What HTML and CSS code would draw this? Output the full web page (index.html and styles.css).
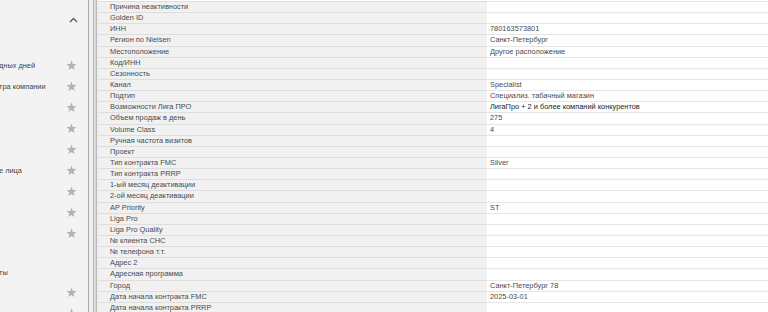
FILE: index.html
```html
<!DOCTYPE html>
<html lang="ru">
<head>
<meta charset="utf-8">
<link rel="stylesheet" href="styles.css">
</head>
<body>
<div class="app">
  <aside class="sidebar">
    <div class="side-head">
      <svg class="chevron" width="9" height="6" viewBox="0 0 9 6"><path d="M1 5 L4.5 1.5 L8 5" fill="none" stroke="#555" stroke-width="1.3"/></svg>
    </div>
    <ul class="side-list">
      <li class="side-item"><span class="side-label">дных дней</span><svg class="star" viewBox="0 0 10 10"><path d="M5 0.4 L6.2 3.6 L9.6 3.7 L6.9 5.8 L7.9 9.2 L5 7.2 L2.1 9.2 L3.1 5.8 L0.4 3.7 L3.8 3.6 Z"/></svg></li>
      <li class="side-item"><span class="side-label">тра компании</span><svg class="star" viewBox="0 0 10 10"><path d="M5 0.4 L6.2 3.6 L9.6 3.7 L6.9 5.8 L7.9 9.2 L5 7.2 L2.1 9.2 L3.1 5.8 L0.4 3.7 L3.8 3.6 Z"/></svg></li>
      <li class="side-item"><span class="side-label"></span><svg class="star" viewBox="0 0 10 10"><path d="M5 0.4 L6.2 3.6 L9.6 3.7 L6.9 5.8 L7.9 9.2 L5 7.2 L2.1 9.2 L3.1 5.8 L0.4 3.7 L3.8 3.6 Z"/></svg></li>
      <li class="side-item"><span class="side-label"></span><svg class="star" viewBox="0 0 10 10"><path d="M5 0.4 L6.2 3.6 L9.6 3.7 L6.9 5.8 L7.9 9.2 L5 7.2 L2.1 9.2 L3.1 5.8 L0.4 3.7 L3.8 3.6 Z"/></svg></li>
      <li class="side-item"><span class="side-label"></span><svg class="star" viewBox="0 0 10 10"><path d="M5 0.4 L6.2 3.6 L9.6 3.7 L6.9 5.8 L7.9 9.2 L5 7.2 L2.1 9.2 L3.1 5.8 L0.4 3.7 L3.8 3.6 Z"/></svg></li>
      <li class="side-item"><span class="side-label">е лица</span><svg class="star" viewBox="0 0 10 10"><path d="M5 0.4 L6.2 3.6 L9.6 3.7 L6.9 5.8 L7.9 9.2 L5 7.2 L2.1 9.2 L3.1 5.8 L0.4 3.7 L3.8 3.6 Z"/></svg></li>
      <li class="side-item"><span class="side-label"></span><svg class="star" viewBox="0 0 10 10"><path d="M5 0.4 L6.2 3.6 L9.6 3.7 L6.9 5.8 L7.9 9.2 L5 7.2 L2.1 9.2 L3.1 5.8 L0.4 3.7 L3.8 3.6 Z"/></svg></li>
      <li class="side-item"><span class="side-label"></span><svg class="star" viewBox="0 0 10 10"><path d="M5 0.4 L6.2 3.6 L9.6 3.7 L6.9 5.8 L7.9 9.2 L5 7.2 L2.1 9.2 L3.1 5.8 L0.4 3.7 L3.8 3.6 Z"/></svg></li>
      <li class="side-item"><span class="side-label"></span><svg class="star" viewBox="0 0 10 10"><path d="M5 0.4 L6.2 3.6 L9.6 3.7 L6.9 5.8 L7.9 9.2 L5 7.2 L2.1 9.2 L3.1 5.8 L0.4 3.7 L3.8 3.6 Z"/></svg></li>
      <li class="side-section"><span class="side-label">ты</span></li>
      <li class="side-item"><span class="side-label"></span><svg class="star" viewBox="0 0 10 10"><path d="M5 0.4 L6.2 3.6 L9.6 3.7 L6.9 5.8 L7.9 9.2 L5 7.2 L2.1 9.2 L3.1 5.8 L0.4 3.7 L3.8 3.6 Z"/></svg></li>
      <li class="side-item"><span class="side-label"></span><svg class="star" viewBox="0 0 10 10"><path d="M5 0.4 L6.2 3.6 L9.6 3.7 L6.9 5.8 L7.9 9.2 L5 7.2 L2.1 9.2 L3.1 5.8 L0.4 3.7 L3.8 3.6 Z"/></svg></li>
    </ul>
  </aside>
  <div class="splitter"><div class="grip"></div></div>
  <div class="grid">
    <div class="lab">Причина неактивности</div><div class="val"></div>
    <div class="lab">Golden ID</div><div class="val"></div>
    <div class="lab">ИНН</div><div class="val">780163573801</div>
    <div class="lab">Регион по Nielsen</div><div class="val">Санкт-Петербург</div>
    <div class="lab">Местоположение</div><div class="val">Другое расположение</div>
    <div class="lab">Код/ИНН</div><div class="val"></div>
    <div class="lab">Сезонность</div><div class="val"></div>
    <div class="lab">Канал</div><div class="val">Specialist</div>
    <div class="lab">Подтип</div><div class="val">Специализ. табачный магазин</div>
    <div class="lab">Возможности Лига ПРО</div><div class="val strong">ЛигаПро + 2 и более компаний конкурентов</div>
    <div class="lab">Объем продаж в день</div><div class="val">275</div>
    <div class="lab">Volume Class</div><div class="val">4</div>
    <div class="lab">Ручная частота визитов</div><div class="val"></div>
    <div class="lab">Проект</div><div class="val"></div>
    <div class="lab">Тип контракта FMC</div><div class="val">Silver</div>
    <div class="lab">Тип контракта PRRP</div><div class="val"></div>
    <div class="lab">1-ый месяц деактивации</div><div class="val"></div>
    <div class="lab">2-ой месяц деактивации</div><div class="val"></div>
    <div class="lab">AP Priority</div><div class="val">ST</div>
    <div class="lab">Liga Pro</div><div class="val"></div>
    <div class="lab">Liga Pro Quality</div><div class="val"></div>
    <div class="lab">№ клиента CHC</div><div class="val"></div>
    <div class="lab">№ телефона т.т.</div><div class="val"></div>
    <div class="lab">Адрес 2</div><div class="val"></div>
    <div class="lab">Адресная программа</div><div class="val"></div>
    <div class="lab">Город</div><div class="val">Санкт-Петербург 78</div>
    <div class="lab">Дата начала контракта FMC</div><div class="val">2025-03-01</div>
    <div class="lab">Дата начала контракта PRRP</div><div class="val"></div>
  </div>
</div>
</body>
</html>
```
FILE: styles.css
```css
html, body {
  margin: 0;
  padding: 0;
  width: 768px;
  height: 312px;
  overflow: hidden;
  background: #ffffff;
  font-family: "Liberation Sans", Arial, sans-serif;
  font-size: 7.4px;
  color: #444;
}

.app {
  display: flex;
  height: 312px;
}

.sidebar {
  width: 88px;
  flex: none;
  background: #f3f3f3;
  border-right: 1px solid #a9a9a9;
  overflow: hidden;
}

.side-head {
  height: 55px;
  display: flex;
  justify-content: flex-end;
  padding-right: 10px;
  padding-top: 17px;
  box-sizing: border-box;
}

.chevron {
  display: block;
}

.side-list {
  list-style: none;
  margin: 0;
  padding: 0;
}

.side-item {
  height: 21px;
  display: flex;
  align-items: center;
  justify-content: space-between;
  padding-right: 11px;
}

.side-section {
  height: 38px;
  display: flex;
  align-items: flex-end;
  padding-bottom: 5px;
  box-sizing: border-box;
}

.side-label {
  color: #444;
  white-space: nowrap;
  margin-left: -1px;
}

.star {
  width: 11px;
  height: 11px;
  fill: #b3b3b3;
  flex: none;
}

.splitter {
  width: 9px;
  flex: none;
  display: flex;
  background: #efefef;
  padding-left: 4px;
  box-sizing: border-box;
}

.grip {
  width: 4px;
  border-left: 1px solid #b9b9b9;
  border-right: 1px solid #b9b9b9;
  background: #dadada;
  box-sizing: border-box;
}

.grid {
  flex: 1;
  display: grid;
  grid-template-columns: 389px 1fr;
  grid-auto-rows: 11.15px;
  align-content: start;
  margin-top: 1px;
}

.lab, .val {
  box-sizing: border-box;
  border-top: 1px solid #dedede;
  white-space: nowrap;
  overflow: hidden;
  line-height: 10px;
}

.lab {
  background: #f1f1f1;
  padding-left: 12px;
  color: #4a4a4a;
}

.val {
  background: #ffffff;
  border-top-color: #e6e6e6;
  padding-left: 3px;
  color: #4a4a4a;
}

.val.strong {
  color: #1a1a1a;
}
```
